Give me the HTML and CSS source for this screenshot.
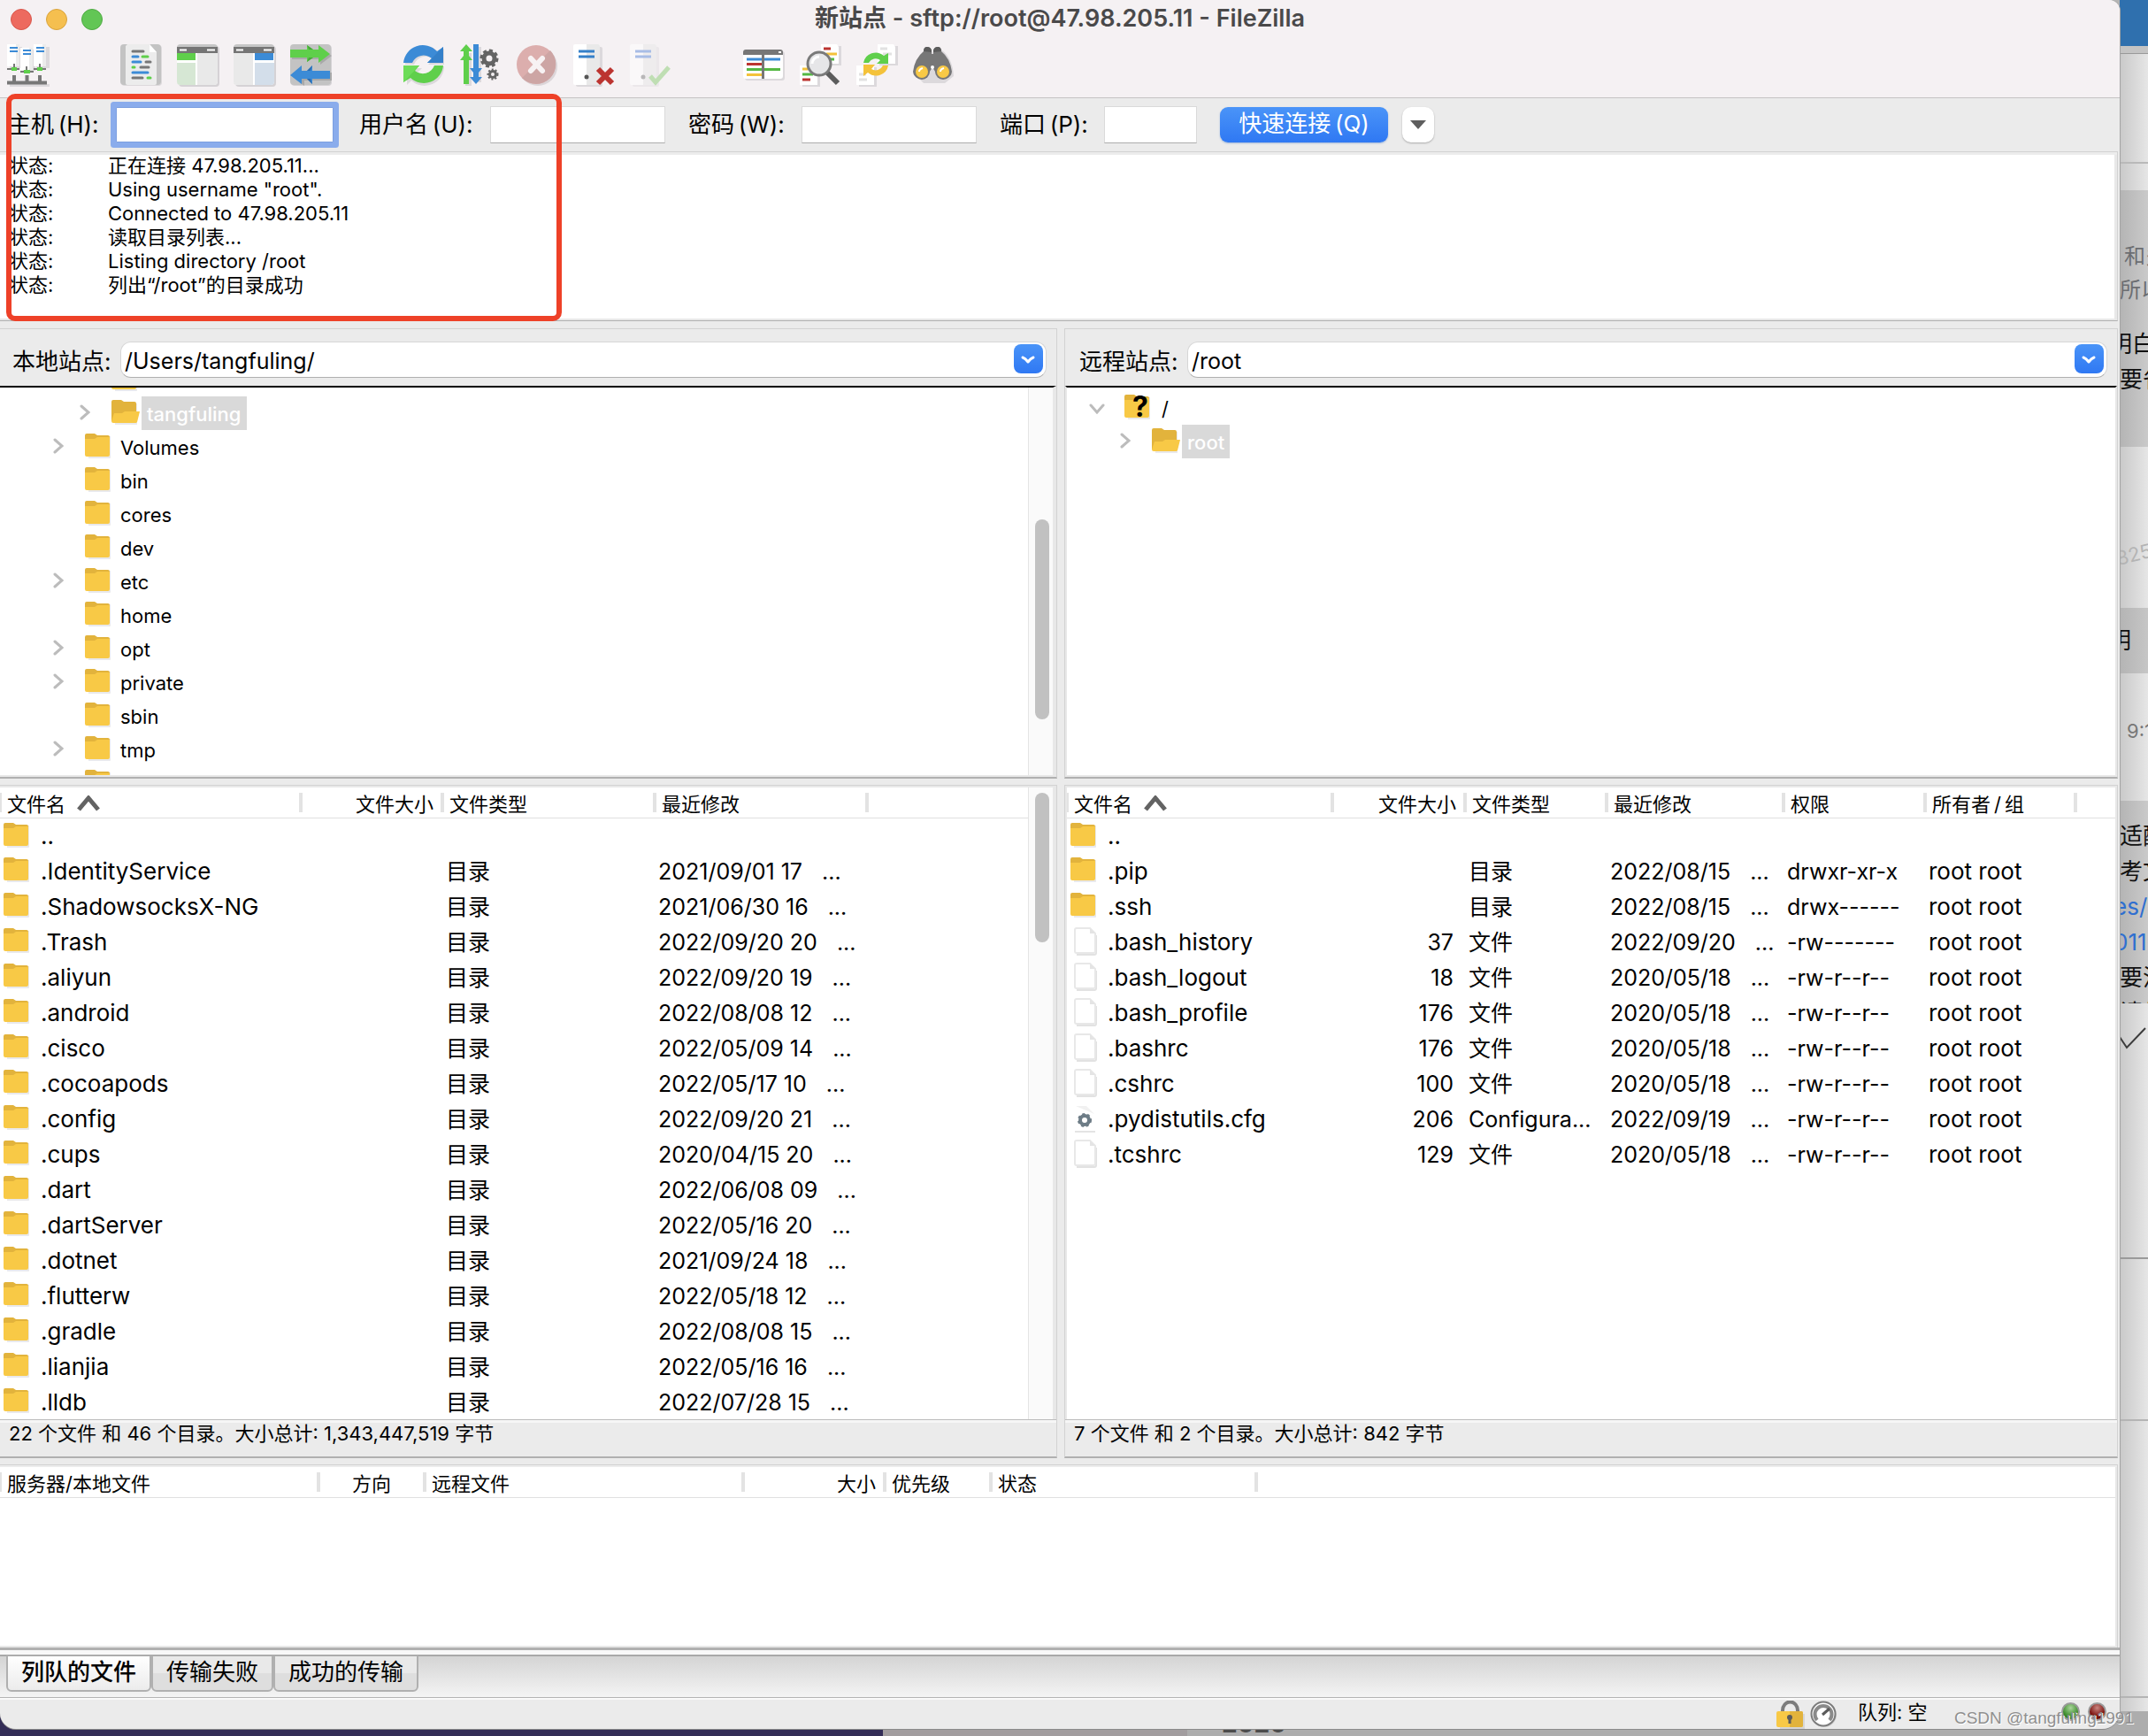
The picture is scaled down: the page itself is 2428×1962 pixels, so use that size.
FILE: index.html
```html
<!DOCTYPE html>
<html lang="zh-CN">
<head>
<meta charset="utf-8">
<title>新站点 - sftp://root@47.98.205.11 - FileZilla</title>
<link rel="stylesheet" href="styles.css">
</head>
<body>
<svg class="defs" aria-hidden="true">
  <symbol id="folder" viewBox="0 0 30 28">
    <path d="M2 3h27v24a1 1 0 0 1-1 1H4z" fill="#e9e9ec"/>
    <path d="M0 2a2 2 0 0 1 2-2h9l3 2h12a2 2 0 0 1 2 2v6H0z" fill="#e2b33c"/>
    <path d="M0 6h11l3-2h14v20a2 2 0 0 1-2 2H2a2 2 0 0 1-2-2z" fill="#f8c946"/>
  </symbol>
  <symbol id="folder-open" viewBox="0 0 32 28">
    <path d="M2 4h27v24H4z" fill="#e9e9ec"/>
    <path d="M0 2a2 2 0 0 1 2-2h9l3 2h12a2 2 0 0 1 2 2v20H0z" fill="#e2b33c"/>
    <path d="M3 15h9l3-2h17l-3 12a2 2 0 0 1-2 1H2a2 2 0 0 1-2-2z" fill="#f8c946"/>
  </symbol>
  <symbol id="file" viewBox="0 0 26 32">
    <path d="M3 31h20a2 2 0 0 0 2-2V9" fill="none" stroke="#e2e2e2" stroke-width="2"/>
    <path d="M1 3a2 2 0 0 1 2-2h15l6 6v20a2 2 0 0 1-2 2H3a2 2 0 0 1-2-2z" fill="#fff" stroke="#e8e8e8" stroke-width="2"/>
    <path d="M18 1v6h6z" fill="#e4e4e4"/>
  </symbol>
  <symbol id="config" viewBox="0 0 26 32">
    <path d="M2 2h12l9 9z" fill="#f1f1f1"/>
    <circle cx="12" cy="18" r="5" fill="none" stroke="#6d7c86" stroke-width="4"/>
    <circle cx="12" cy="18" r="7" fill="none" stroke="#6d7c86" stroke-width="2" stroke-dasharray="3 3"/>
    <path d="M1 31h23" stroke="#e4e4e4" stroke-width="2"/>
  </symbol>
  <symbol id="chev" viewBox="0 0 12 18"><path d="M2 2l8 7-8 7" fill="none" stroke="#bcbcbc" stroke-width="3" stroke-linecap="round"/></symbol>
  <symbol id="chev-down" viewBox="0 0 18 12"><path d="M2 2l7 8 7-8" fill="none" stroke="#bcbcbc" stroke-width="3" stroke-linecap="round"/></symbol>
  <symbol id="caret" viewBox="0 0 28 18"><path d="M3 16L14 3l11 13" fill="none" stroke="#636363" stroke-width="5"/></symbol>
  <symbol id="combo" viewBox="0 0 32 32"><path d="M10 14q3 1 6 5q3-4 6-5" fill="none" stroke="#fff" stroke-width="3" stroke-linecap="round" stroke-linejoin="round"/></symbol>
</svg>

<main class="window">
  <header class="chrome">
    <div class="titlebar">
      <div class="lights"><button class="light light-close" aria-label="关闭"></button><button class="light light-min" aria-label="最小化"></button><button class="light light-max" aria-label="缩放"></button></div>
      <h1 class="title">新站点 - sftp://root@47.98.205.11 - FileZilla</h1>
    </div>
    <div class="toolbar">
      <button class="tool" aria-label="站点管理器"><svg viewBox="0 0 48 48">
        <path d="M3 3h14v24H3zM18 6h14v24H18zM33 3h15v24H33zM3 45h45v3H3z" fill="#dcd9dc"/>
        <path d="M0 0h14v25H0zM15 4h14v25H15zM30 0h14v25H30z" fill="#fff"/>
        <path d="M10 0h4v25h-4zM25 4h4v25h-4zM40 0h4v25h-4z" fill="#ececec"/>
        <path d="M3 4h9M3 8h9M18 7h9M18 11h9M33 4h9M33 8h9" stroke="#3c8bd6" stroke-width="2"/>
        <path d="M0 28h14M30 28h14M15 31h15M8 22v6M22 25v6M37 22v6" stroke="#777" stroke-width="2"/>
        <path d="M0 43.500h45M8 35v9M22.500 35v9M37 35v9" stroke="#777" stroke-width="4"/>
        <path d="M5 26h6v4H5zM19 29h7v4h-7zM34 26h6v4h-6z" fill="#5fcf4b"/>
      </svg></button>
      <span class="tool-gap"></span>
      <button class="tool" aria-label="消息日志"><svg viewBox="0 0 48 48">
        <rect x="1" y="1" width="46" height="46" rx="4" fill="#dcd9dc"/><rect width="46" height="46" rx="4" fill="#c3c3c3"/>
        <path d="M8 0h25l8 9v35a2 2 0 0 1-2 2H8a2 2 0 0 1-2-2V2z" fill="#ececec"/><path d="M33 0l8 9h-8z" fill="#fff"/>
        <g stroke-width="3" stroke-linecap="round"><path d="M14 8h12M29 20h5M23 26h9M14 38h11" stroke="#777"/><path d="M14 14h6M14 20h9M14 32h17" stroke="#3c8bd6"/><path d="M25 14h6M14 26h2M31 38h3" stroke="#5fcf4b"/></g>
      </svg></button>
      <button class="tool" aria-label="本地目录树"><svg viewBox="0 0 48 48">
        <rect x="2" y="2" width="46" height="46" rx="4" fill="#d5d2d5"/><rect width="46" height="46" rx="4" fill="#c6c6c6"/>
        <path d="M0 10h46v32a4 4 0 0 1-4 4H4a4 4 0 0 1-4-4z" fill="#fff"/>
        <path d="M23 10h23v32a4 4 0 0 1-4 4H23z" fill="#e9e9e9"/><path d="M0 3h46v7H0z" fill="#757575"/>
        <path d="M3 6.500h8M34 6.500h9" stroke="#fff" stroke-width="2"/><path d="M0 10h21v8H0z" fill="#5fcf4b"/><path d="M0 21h21v25H4a4 4 0 0 1-4-4z" fill="#d6e7d4"/>
      </svg></button>
      <button class="tool" aria-label="远程目录树"><svg viewBox="0 0 48 48">
        <rect x="2" y="2" width="46" height="46" rx="4" fill="#d5d2d5"/><rect width="46" height="46" rx="4" fill="#c6c6c6"/>
        <path d="M0 10h46v32a4 4 0 0 1-4 4H4a4 4 0 0 1-4-4z" fill="#fff"/>
        <path d="M0 10h22v36H4a4 4 0 0 1-4-4z" fill="#e9e9e9"/><path d="M0 3h46v7H0z" fill="#757575"/>
        <path d="M3 6.500h8M34 6.500h9" stroke="#fff" stroke-width="2"/><path d="M24 10h21v8H24z" fill="#3c8bd6"/><path d="M24 21h22v21a4 4 0 0 1-4 4H24z" fill="#d3deea"/>
      </svg></button>
      <button class="tool" aria-label="传输队列"><svg viewBox="0 0 48 48">
        <rect x="1" y="1" width="46" height="46" rx="4" fill="#d5d2d5"/><rect width="46" height="46" rx="4" fill="#c3c3c3"/>
        <path d="M2 8h30V3l15 10-13 10v-6H2zM3 32h44v9H16v6L3 37z" fill="#a9a9a9"/>
        <path d="M0 6h19V1l7 5h6V1l13 10-13 10v-6h-6l-7 5v-5H0z" fill="#5fcf4b"/>
        <path d="M45 30H25v-6l-6 6h-6v-6L0 35l13 10v-6h6l6 6v-6h20z" fill="#3c8bd6"/>
        <path d="M19 1l7 5h-5zM19 20l7-5h-5z" fill="#45a838"/><path d="M25 24l-6 6h4zM25 45l-6-6h4z" fill="#2b6cb0"/>
      </svg></button>
      <span class="tool-gap"></span>
      <button class="tool" aria-label="刷新"><svg viewBox="0 0 48 48">
        <path d="M2 23A22 22 0 0 1 40 9l6-4v18H28l6-6A14 14 0 0 0 12 23z" fill="#dcd9dc"/><path d="M46 25A22 22 0 0 1 9 41l-5 5V27h17l-6 6a14 14 0 0 0 20-8z" fill="#dcd9dc"/>
        <path d="M0 21A22 22 0 0 1 38 8l7-5v18H27l5-5A14 14 0 0 0 10 21z" fill="#3c8bd6"/><path d="M27 21h18V3z" fill="#3480c9"/>
        <path d="M45 24A22 22 0 0 1 8 38l-8 5V24h18l-5 6a14 14 0 0 0 22-6z" fill="#5fcf4b"/><path d="M18 24H0v19z" fill="#6ddc58"/>
      </svg></button>
      <button class="tool" aria-label="处理队列"><svg viewBox="0 0 48 48">
        <path d="M6 10h7v37H6zM17 3h7v40H17z" fill="#dcd9dc"/>
        <path d="M7 0l7 8h-4v5l4 5h-4v27H4V18H0l4-5V8H0z" fill="#5fcf4b"/>
        <path d="M15 0h6v27h4l-4 5v5h4l-7 8-7-8h4v-5l-4-5h4z" fill="#3c8bd6"/>
        <circle cx="33" cy="16" r="6" fill="none" stroke="#646464" stroke-width="5"/><circle cx="33" cy="16" r="9" fill="none" stroke="#646464" stroke-width="3" stroke-dasharray="4 3"/>
        <circle cx="37" cy="34" r="3.500" fill="none" stroke="#646464" stroke-width="3"/><circle cx="37" cy="34" r="5.500" fill="none" stroke="#646464" stroke-width="2" stroke-dasharray="2 2"/>
      </svg></button>
      <button class="tool" aria-label="取消"><svg viewBox="0 0 48 48">
        <circle cx="24" cy="25" r="22" fill="#dcd6d9"/><circle cx="22" cy="23" r="22" fill="#dcaead"/><path d="M38 7a22 22 0 0 1-32 31z" fill="#cda5a4"/>
        <path d="M16 16l13 14M29 16L16 30" stroke="#f7f2f3" stroke-width="6" stroke-linecap="round"/>
      </svg></button>
      <button class="tool" aria-label="断开连接"><svg viewBox="0 0 48 48">
        <rect x="3" y="3" width="30" height="45" rx="2" fill="#dcd9dc"/><rect width="30" height="46" rx="2" fill="#fff"/><path d="M15 0h13a2 2 0 0 1 2 2v42a2 2 0 0 1-2 2H15z" fill="#e9e9e9"/>
        <path d="M6 8h18M6 14h18" stroke="#3580c9" stroke-width="3"/><circle cx="15" cy="37" r="2.500" fill="#555"/>
        <path d="M28 28l16 16M44 28L28 44" stroke="#bc3430" stroke-width="6"/>
      </svg></button>
      <button class="tool tool-off" aria-label="重新连接"><svg viewBox="0 0 48 48">
        <rect x="3" y="3" width="30" height="45" rx="2" fill="#e3e0e3"/><rect width="30" height="46" rx="2" fill="#fff"/><path d="M15 0h13a2 2 0 0 1 2 2v42a2 2 0 0 1-2 2H15z" fill="#e9e9e9"/>
        <path d="M6 8h18M6 14h18" stroke="#6a94dc" stroke-width="3"/><circle cx="15" cy="37" r="2.500" fill="#888"/>
        <path d="M23 36l6 7 15-17" fill="none" stroke="#94d080" stroke-width="5"/>
      </svg></button>
      <span class="tool-gap"></span>
      <button class="tool" aria-label="目录比较"><svg viewBox="0 0 48 48">
        <rect x="2" y="8" width="45" height="33" rx="3" fill="#dcd9dc"/><rect y="6" width="45" height="33" rx="3" fill="#fff"/><path d="M0 12V9a3 3 0 0 1 3-3h39a3 3 0 0 1 3 3v3z" fill="#777"/>
        <path d="M40 9h3" stroke="#fff" stroke-width="2"/>
        <g stroke-width="3"><path d="M4 17h38" stroke="#3c8bd6"/><path d="M4 22.500h18" stroke="#bc3430"/><path d="M4 28.500h38" stroke="#55b844"/><path d="M4 34.500h18" stroke="#f4c23a"/><path d="M22.500 12v27" stroke="#777"/></g>
      </svg></button>
      <button class="tool" aria-label="筛选"><svg viewBox="0 0 48 48">
        <path d="M26 2h21v22H26zM3 26h20v22H3z" fill="#dcd9dc"/><path d="M24 0h18l2 3v19H24zM0 24h20v22H0z" fill="#fff"/>
        <g stroke-width="3"><path d="M27 5h8M3 40h9" stroke="#bc3430"/><path d="M30 11h12M3 28h6" stroke="#f4c23a"/><path d="M34 17h5M3 34h12" stroke="#55b844"/></g>
        <path d="M30 31l13 13" stroke="#5c5c5c" stroke-width="6"/><circle cx="22" cy="22" r="13" fill="#e6e6e8" stroke="#7a7a7a" stroke-width="3"/><path d="M14 22a8 8 0 0 1 8-8" fill="none" stroke="#fff" stroke-width="3"/>
      </svg></button>
      <button class="tool" aria-label="同步浏览"><svg viewBox="0 0 48 48">
        <path d="M26 2h21v22H26zM3 26h20v22H3z" fill="#dcd9dc"/><path d="M24 0h18l2 3v19H24zM0 24h20v22H0z" fill="#fff"/>
        <path d="M27 5h8M30 11h10M3 34h8M3 40h9" stroke="#e2e2e2" stroke-width="3"/>
        <path d="M8 21a14 14 0 0 1 23-8l5-3v12H23l4-4a9 9 0 0 0-13 3z" fill="#5fcf4b"/><path d="M36 24a14 14 0 0 1-23 8l-5 4V23h13l-4 5a9 9 0 0 0 13-4z" fill="#f4c23a"/>
      </svg></button>
      <button class="tool" aria-label="查找文件"><svg viewBox="0 0 48 48">
        <path d="M4 36q0-20 12-30l8 4 8-4q13 10 14 30l-10 8H12z" fill="#dcd9dc"/>
        <path d="M12 8q0-5 4-5t5 4v4h2V7q1-4 5-4t4 5q10 8 12 23a9 9 0 0 1-17 3l-5-8-5 8A9 9 0 0 1 0 31Q2 16 12 8z" fill="#777"/>
        <path d="M12 8q0-5 4-5t5 4v2zM23 9V7q1-4 5-4t4 5z" fill="#5c5c5c"/><circle cx="22" cy="26" r="2" fill="#fff"/>
        <circle cx="10" cy="31" r="9" fill="#777"/><circle cx="34" cy="31" r="9" fill="#777"/>
        <circle cx="10" cy="31" r="7" fill="#f8c946"/><circle cx="34" cy="31" r="7" fill="#f8c946"/>
        <path d="M7 31q0-3 4-4M31 31q0-3 4-4" fill="none" stroke="#fff" stroke-width="2"/>
      </svg></button>
    </div>
  </header>

  <form class="quick">
    <label class="q-host" for="host">主机&#8201;(H):</label><input class="field field-focus" id="host" type="text">
    <label class="q-user" for="user">用户名&#8201;(U):</label><input class="field" id="user" type="text">
    <label class="q-pass" for="pass">密码&#8201;(W):</label><input class="field" id="pass" type="password">
    <label class="q-port" for="port">端口&#8201;(P):</label><input class="field field-port" id="port" type="text">
    <button class="connect" type="button">快速连接&#8201;(Q)</button>
    <button class="history" type="button" aria-label="历史"><svg viewBox="0 0 18 10"><path d="M0 0h18L9 10z" fill="#5e5e5e"/></svg></button>
  </form>

  <dl class="log">
    <dt>状态:</dt><dd>正在连接 47.98.205.11...</dd>
    <dt>状态:</dt><dd>Using username "root".</dd>
    <dt>状态:</dt><dd>Connected to 47.98.205.11</dd>
    <dt>状态:</dt><dd>读取目录列表...</dd>
    <dt>状态:</dt><dd>Listing directory /root</dd>
    <dt>状态:</dt><dd>列出“/root”的目录成功</dd>
  </dl>

  <div class="panes">
    <section class="pane site site-local">
      <div class="address"><label for="local">本地站点:</label><div class="combo"><input id="local" type="text" value="/Users/tangfuling/"><button aria-label="展开"><svg><use href="#combo"/></svg></button></div></div>
      <div class="scroll">
        <ul class="tree tree-local">
          <li class="deep"><span class="tw"></span><svg class="ico"><use href="#folder"/></svg></li>
          <li class="deep"><span class="tw"><svg><use href="#chev"/></svg></span><svg class="ico-open"><use href="#folder-open"/></svg><span class="sel">tangfuling</span></li>
          <li><span class="tw"><svg><use href="#chev"/></svg></span><svg class="ico"><use href="#folder"/></svg><span>Volumes</span></li>
          <li><span class="tw"></span><svg class="ico"><use href="#folder"/></svg><span>bin</span></li>
          <li><span class="tw"></span><svg class="ico"><use href="#folder"/></svg><span>cores</span></li>
          <li><span class="tw"></span><svg class="ico"><use href="#folder"/></svg><span>dev</span></li>
          <li><span class="tw"><svg><use href="#chev"/></svg></span><svg class="ico"><use href="#folder"/></svg><span>etc</span></li>
          <li><span class="tw"></span><svg class="ico"><use href="#folder"/></svg><span>home</span></li>
          <li><span class="tw"><svg><use href="#chev"/></svg></span><svg class="ico"><use href="#folder"/></svg><span>opt</span></li>
          <li><span class="tw"><svg><use href="#chev"/></svg></span><svg class="ico"><use href="#folder"/></svg><span>private</span></li>
          <li><span class="tw"></span><svg class="ico"><use href="#folder"/></svg><span>sbin</span></li>
          <li><span class="tw"><svg><use href="#chev"/></svg></span><svg class="ico"><use href="#folder"/></svg><span>tmp</span></li>
          <li><span class="tw"></span><svg class="ico"><use href="#folder"/></svg></li>
        </ul>
        <div class="track track-tree"><div class="thumb"></div></div>
      </div>
    </section>
    <section class="pane site site-remote">
      <div class="address"><label for="remote">远程站点:</label><div class="combo"><input id="remote" type="text" value="/root"><button aria-label="展开"><svg><use href="#combo"/></svg></button></div></div>
      <div class="scroll">
        <ul class="tree tree-remote">
          <li><span class="tw"><svg class="down"><use href="#chev-down"/></svg></span><span class="unknown"><svg class="ico"><use href="#folder"/></svg><b>?</b></span><span>/</span></li>
          <li class="deep"><span class="tw"><svg><use href="#chev"/></svg></span><svg class="ico-open"><use href="#folder-open"/></svg><span class="sel">root</span></li>
        </ul>
      </div>
    </section>

    <section class="pane files files-local">
      <div class="scroll">
        <table class="list">
          <colgroup><col class="w338"><col class="w160"><col class="w240"><col class="w240"><col></colgroup>
          <thead><tr><th>文件名<svg class="sort"><use href="#caret"/></svg></th><th class="num">文件大小</th><th>文件类型</th><th>最近修改</th><th></th></tr></thead>
          <tbody>
            <tr><td><svg class="ico"><use href="#folder"/></svg>..</td><td></td><td></td><td></td><td></td></tr>
            <tr><td><svg class="ico"><use href="#folder"/></svg>.IdentityService</td><td></td><td>目录</td><td>2021/09/01 17<i>...</i></td><td></td></tr>
            <tr><td><svg class="ico"><use href="#folder"/></svg>.ShadowsocksX-NG</td><td></td><td>目录</td><td>2021/06/30 16<i>...</i></td><td></td></tr>
            <tr><td><svg class="ico"><use href="#folder"/></svg>.Trash</td><td></td><td>目录</td><td>2022/09/20 20<i>...</i></td><td></td></tr>
            <tr><td><svg class="ico"><use href="#folder"/></svg>.aliyun</td><td></td><td>目录</td><td>2022/09/20 19<i>...</i></td><td></td></tr>
            <tr><td><svg class="ico"><use href="#folder"/></svg>.android</td><td></td><td>目录</td><td>2022/08/08 12<i>...</i></td><td></td></tr>
            <tr><td><svg class="ico"><use href="#folder"/></svg>.cisco</td><td></td><td>目录</td><td>2022/05/09 14<i>...</i></td><td></td></tr>
            <tr><td><svg class="ico"><use href="#folder"/></svg>.cocoapods</td><td></td><td>目录</td><td>2022/05/17 10<i>...</i></td><td></td></tr>
            <tr><td><svg class="ico"><use href="#folder"/></svg>.config</td><td></td><td>目录</td><td>2022/09/20 21<i>...</i></td><td></td></tr>
            <tr><td><svg class="ico"><use href="#folder"/></svg>.cups</td><td></td><td>目录</td><td>2020/04/15 20<i>...</i></td><td></td></tr>
            <tr><td><svg class="ico"><use href="#folder"/></svg>.dart</td><td></td><td>目录</td><td>2022/06/08 09<i>...</i></td><td></td></tr>
            <tr><td><svg class="ico"><use href="#folder"/></svg>.dartServer</td><td></td><td>目录</td><td>2022/05/16 20<i>...</i></td><td></td></tr>
            <tr><td><svg class="ico"><use href="#folder"/></svg>.dotnet</td><td></td><td>目录</td><td>2021/09/24 18<i>...</i></td><td></td></tr>
            <tr><td><svg class="ico"><use href="#folder"/></svg>.flutterw</td><td></td><td>目录</td><td>2022/05/18 12<i>...</i></td><td></td></tr>
            <tr><td><svg class="ico"><use href="#folder"/></svg>.gradle</td><td></td><td>目录</td><td>2022/08/08 15<i>...</i></td><td></td></tr>
            <tr><td><svg class="ico"><use href="#folder"/></svg>.lianjia</td><td></td><td>目录</td><td>2022/05/16 16<i>...</i></td><td></td></tr>
            <tr><td><svg class="ico"><use href="#folder"/></svg>.lldb</td><td></td><td>目录</td><td>2022/07/28 15<i>...</i></td><td></td></tr>
          </tbody>
        </table>
        <div class="track track-list"><div class="thumb"></div></div>
      </div>
      <p class="summary">22 个文件 和 46 个目录。大小总计: 1,343,447,519 字节</p>
    </section>
    <section class="pane files files-remote">
      <div class="scroll">
        <table class="list">
          <colgroup><col class="w298"><col class="w150"><col class="w160"><col class="w200"><col class="w160"><col class="w170"><col></colgroup>
          <thead><tr><th>文件名<svg class="sort"><use href="#caret"/></svg></th><th class="num">文件大小</th><th>文件类型</th><th>最近修改</th><th>权限</th><th>所有者&#8201;/&#8201;组</th><th></th></tr></thead>
          <tbody>
            <tr><td><svg class="ico"><use href="#folder"/></svg>..</td><td></td><td></td><td></td><td></td><td></td><td></td></tr>
            <tr><td><svg class="ico"><use href="#folder"/></svg>.pip</td><td></td><td>目录</td><td>2022/08/15<i>...</i></td><td>drwxr-xr-x</td><td class="own">root root</td><td></td></tr>
            <tr><td><svg class="ico"><use href="#folder"/></svg>.ssh</td><td></td><td>目录</td><td>2022/08/15<i>...</i></td><td>drwx------</td><td class="own">root root</td><td></td></tr>
            <tr><td><svg class="ico-file"><use href="#file"/></svg>.bash_history</td><td class="num">37</td><td>文件</td><td>2022/09/20<i>...</i></td><td>-rw-------</td><td class="own">root root</td><td></td></tr>
            <tr><td><svg class="ico-file"><use href="#file"/></svg>.bash_logout</td><td class="num">18</td><td>文件</td><td>2020/05/18<i>...</i></td><td>-rw-r--r--</td><td class="own">root root</td><td></td></tr>
            <tr><td><svg class="ico-file"><use href="#file"/></svg>.bash_profile</td><td class="num">176</td><td>文件</td><td>2020/05/18<i>...</i></td><td>-rw-r--r--</td><td class="own">root root</td><td></td></tr>
            <tr><td><svg class="ico-file"><use href="#file"/></svg>.bashrc</td><td class="num">176</td><td>文件</td><td>2020/05/18<i>...</i></td><td>-rw-r--r--</td><td class="own">root root</td><td></td></tr>
            <tr><td><svg class="ico-file"><use href="#file"/></svg>.cshrc</td><td class="num">100</td><td>文件</td><td>2020/05/18<i>...</i></td><td>-rw-r--r--</td><td class="own">root root</td><td></td></tr>
            <tr><td><svg class="ico-file"><use href="#config"/></svg>.pydistutils.cfg</td><td class="num">206</td><td>Configura...</td><td>2022/09/19<i>...</i></td><td>-rw-r--r--</td><td class="own">root root</td><td></td></tr>
            <tr><td><svg class="ico-file"><use href="#file"/></svg>.tcshrc</td><td class="num">129</td><td>文件</td><td>2020/05/18<i>...</i></td><td>-rw-r--r--</td><td class="own">root root</td><td></td></tr>
          </tbody>
        </table>
      </div>
      <p class="summary">7 个文件 和 2 个目录。大小总计: 842 字节</p>
    </section>
  </div>

  <section class="queue">
    <table class="list">
      <colgroup><col class="w358"><col class="w120"><col class="w360"><col class="w160"><col class="w120"><col class="w300"><col></colgroup>
      <thead><tr><th>服务器/本地文件</th><th class="mid">方向</th><th>远程文件</th><th class="num">大小</th><th>优先级</th><th>状态</th><th></th></tr></thead>
    </table>
  </section>

  <nav class="tabs"><button class="tab tab-on">列队的文件</button><button class="tab">传输失败</button><button class="tab">成功的传输</button></nav>

  <footer class="status">
    <svg class="s-ico" viewBox="0 0 32 32"><path d="M2 15h30v17H4z" fill="#d6d6d6"/><path d="M7 13v-2a8 9 0 0 1 17 0v2" fill="none" stroke="#7c7c7c" stroke-width="4"/><rect y="12" width="30" height="18" rx="2" fill="#f8c946"/><path d="M15 12h13a2 2 0 0 1 2 2v14a2 2 0 0 1-2 2H15z" fill="#e2b33c"/><circle cx="15" cy="19" r="3" fill="#5b5b5b"/><path d="M15 19v7" stroke="#5b5b5b" stroke-width="3"/></svg>
    <svg class="s-ico" viewBox="0 0 32 32"><circle cx="16" cy="16" r="14" fill="#d0d0d0"/><circle cx="15" cy="15" r="13.500" fill="#fff" stroke="#7c7c7c" stroke-width="2"/><path d="M8 22a9.500 9.500 0 1 1 14 0" fill="none" stroke="#8a8a8a" stroke-width="4"/><path d="M14 16l8-7" stroke="#5b5b5b" stroke-width="3"/></svg>
    <span class="s-text">队列: 空</span>
    <span class="led led-green"></span><span class="led led-red"></span>
  </footer>
</main>

<aside class="behind">
  <div class="b-top"></div><div class="b-bar"></div><div class="b-head"></div>
  <div class="b-msg b-msg1"><p class="dim first">和多</p><p class="dim">所以</p><p class="gap">明白</p><p>要省</p></div>
  <div class="b-space"><span>825</span></div>
  <div class="b-chip">明</div>
  <div class="b-time">9:1</div>
  <div class="b-msg b-msg2"><p>适配</p><p>考文</p><p class="link">es/</p><p class="link">011</p><p>要注</p><p>请的</p></div>
  <div class="b-check"><svg viewBox="0 0 32 26"><path d="M0 12l8 12L29 2" fill="none" stroke="#3c3c3c" stroke-width="2"/></svg></div>
  <div class="b-rest"></div><div class="b-rest"></div>
</aside>
<div class="dock"><span class="dock-navy"></span><span class="dock-side"></span><span class="dock-doc">2020</span></div>
<div class="mark-box" aria-hidden="true"></div>
<p class="watermark">CSDN @tangfuling1991</p>
</body>
</html>
```
FILE: styles.css
```css
* { box-sizing: border-box; }
body {
  margin: 0;
  min-height: 100vh;
  position: relative;
  display: grid;
  grid-template: minmax(0, 1fr) 8px / minmax(0, 1fr) 32px;
  font-family: Inter, "Noto Sans CJK SC", sans-serif;
  font-size: 22px;
  color: #000;
  background: #b4b4b4;
  overflow-x: hidden;
}
button, input { font: inherit; color: inherit; border: 0; margin: 0; padding: 0; outline: 0; }
button { background: none; }
h1, p, ul, dl, dd { margin: 0; padding: 0; }
svg { display: block; flex: none; }
.defs { position: absolute; width: 0; height: 0; }

.window {
  display: flex;
  flex-direction: column;
  min-width: 0;
  background: #ebebeb;
  border-radius: 0 12px 20px 18px;
  box-shadow: 1px 0 0 #a4a4a4, 0 1px 0 #8a8a8a;
  overflow: hidden;
  z-index: 1;
}
.chrome { background: #f5f1f3; height: 111px; border-bottom: 1px solid #c6c3c4; }
.titlebar { display: grid; grid-template-columns: 200px 1fr 200px; align-items: center; height: 44px; }
.lights { display: flex; gap: 16px; padding-left: 12px; }
.light { width: 24px; height: 24px; border-radius: 50%; border: 1px solid; }
.light-close { background: #ed6a5f; border-color: #d9564b; }
.light-min { background: #f5bf4f; border-color: #d9a33c; }
.light-max { background: #62c655; border-color: #50aa44; }
.title { font-size: 27px; font-weight: 600; line-height: 42px; padding-bottom: 2px; text-align: center; color: #4a494a; }
.toolbar { display: flex; gap: 16px; padding: 6px 8px; }
.tool { width: 48px; height: 48px; }
.tool svg { width: 48px; height: 48px; }
.tool-off { opacity: .55; }
.tool-gap { width: 48px; }

.quick { display: flex; align-items: center; height: 60px; padding-left: 9px; font-size: 26px; white-space: nowrap; }
.quick label { line-height: 40px; }
.q-host { width: 122px; }
.q-user { width: 148px; margin-left: 29px; }
.q-pass { width: 128px; margin-left: 26px; }
.q-port { width: 118px; margin-left: 26px; }
.field { width: 198px; height: 42px; background: #fff; border: 1px solid #dadada; border-bottom-color: #acacac; }
.field-focus { width: 246px; height: 40px; border-color: #7c9fe0; box-shadow: 0 0 0 6px #8aacec; border-radius: 1px; }
.field-port { width: 105px; }
.connect { width: 190px; height: 40px; margin: 0 16px 0 26px; border-radius: 9px; color: #fff; line-height: 36px; padding-bottom: 2px; background: linear-gradient(#4a94f8, #2f78f3); box-shadow: 0 1px 2px #9fb6d8; }
.history { width: 36px; height: 40px; border-radius: 10px; background: #fff; box-shadow: 0 1px 2px #aaa; display: flex; align-items: center; justify-content: center; }
.history svg { width: 18px; height: 10px; }

.log {
  display: grid;
  grid-template-columns: 112px 1fr;
  grid-auto-rows: 27px;
  align-content: start;
  height: 192px;
  padding: 2px 0 0 10px;
  border: solid #d2d2d2;
  border-width: 1px 1px 1px 0;
  border-bottom-color: #b0b0b0;
  box-shadow: inset 0 3px #ececec, inset -3px -2px #e8e8e8;
  margin-right: 2px;
  background: #fff;
  line-height: 27px;
}

.panes { display: grid; grid-template-columns: minmax(0, 1195fr) minmax(0, 1191fr); column-gap: 8px; row-gap: 7px; margin: 8px 2px 0 0; }
.pane { display: flex; flex-direction: column; min-width: 0; border: 1px solid #d2d2d2; border-bottom: 2px solid #b0b0b0; }
.site-local, .files-local { border-left: 0; }
.address { display: flex; align-items: center; height: 64px; padding: 4px 11px 0 14px; font-size: 26px; }
.site-remote .address { padding-left: 16px; }
.address label { width: 122px; white-space: nowrap; }
.combo { flex: 1; display: flex; align-items: center; height: 41px; background: #fff; border-radius: 12px; border: 1px solid #d6d6d6; border-bottom-color: #b0b0b0; padding: 0 3px 1px 4px; }
.combo input { flex: 1; min-width: 0; height: 36px; margin-top: 5px; background: none; font-size: 25px; }
.combo button { width: 33px; height: 33px; border-radius: 8px; background: linear-gradient(#4a94f8, #2f78f3); }
.combo svg { width: 32px; height: 32px; }
.scroll { display: flex; flex: 1; background: #fff; min-height: 0; }
.site .scroll { height: 442px; flex: none; border-top: 2px solid #000; border-bottom: 2px solid #e8e8e8; }
.pane .scroll { border-right: 4px solid #e8e8e8; }
.site-remote .scroll, .files-remote .scroll { border-left: 2px solid #e8e8e8; border-right-width: 2px; }

.tree { flex: 1; list-style: none; overflow: hidden; }
.tree li { display: flex; align-items: flex-start; height: 38px; padding-left: 60px; line-height: 38px; font-size: 22px; }
.tree li > span:last-child { padding: 1px 6px 0; height: 38px; }
.tree .deep { padding-left: 90px; }
.tw { width: 36px; height: 38px; }
.tree .tw svg { width: 12px; height: 18px; margin-top: 9px; }
.tree .tw .down { width: 18px; height: 12px; margin-top: 14px; }
.ico { width: 30px; height: 28px; margin-right: 4px; }
.tree .ico, .tree .ico-open { margin-top: 4px; }
.ico-open { width: 32px; height: 28px; margin-right: 2px; }
.tree .sel { background: #d9d9d9; color: #fff; font-weight: 500; }
.tree-local li:first-child { height: 10px; }
.tree-local li:first-child .ico { margin-top: -24px; }
.tree-remote { padding-top: 4px; }
.tree-remote li { padding-left: 25px; }
.tree-remote .tw { width: 40px; }
.tree-remote .deep { padding-left: 60px; }
.tree-remote .deep .tw { width: 36px; }
.unknown { position: relative; margin-right: 2px; }
.unknown b { position: absolute; left: 9px; top: 0; font-size: 32px; line-height: 36px; }

.track { width: 28px; border-left: 1px solid #e4e4e4; background: #fafafa; padding: 0 4px 0 7px; }
.thumb { width: 16px; border-radius: 8px; background: #c1c1c1; }
.track-tree { padding-top: 149px; }
.track-tree .thumb { height: 226px; }
.track-list { padding-top: 6px; }
.track-list .thumb { height: 169px; }

.files .scroll { border-top: 2px solid #e8e8e8; align-items: flex-start; }
.files .track { align-self: stretch; }
.list { flex: 1; width: 100%; table-layout: fixed; border-collapse: collapse; }
.list th {
  height: 34px;
  padding: 4px 0 0 10px;
  font-size: 22px;
  font-weight: 400;
  line-height: 28px;
  text-align: left;
  white-space: nowrap;
  border-bottom: 1px solid #e0e0e0;
  background: linear-gradient(#e3e3e3, #e3e3e3) no-repeat 0 6px / 4px 22px;
}
.list th:first-child { padding-left: 8px; background-size: 2px 22px; }
.list .num { text-align: right; padding-right: 8px; }
.list .mid { text-align: center; padding: 4px 0 0 4px; }
.list td { height: 40px; padding: 1px 0 0 6px; font-size: 25px; line-height: 38px; white-space: nowrap; }
.list td:first-child { padding-left: 4px; font-size: 26px; }
.list .own { font-size: 26px; }
.list td.num { padding-right: 11px; }
.list td i { font-style: normal; margin-left: 22px; }
.list td svg { display: inline-block; vertical-align: middle; }
.list td .ico { margin: -6px 12px 0 0; }
.list td .ico-file { width: 26px; height: 32px; margin: -4px 12px 0 4px; }
.sort { display: inline-block; width: 28px; height: 18px; margin-left: 12px; }
.w338 { width: 338px; } .w160 { width: 160px; } .w240 { width: 240px; }
.w298 { width: 298px; } .w150 { width: 150px; } .w200 { width: 200px; } .w170 { width: 170px; }
.w358 { width: 358px; } .w120 { width: 120px; } .w360 { width: 360px; } .w300 { width: 300px; }
.summary { height: 42px; padding: 0 10px; border-top: 1px solid #bcbcbc; box-shadow: inset 0 3px #f6f6f6; line-height: 30px; font-size: 22px; }

.queue { flex: 1; margin: 7px 2px 0 0; min-height: 120px; background: #fff; border: solid #d2d2d2; border-width: 1px 1px 0 0; box-shadow: inset 0 2px #ececec, inset -2px -2px #e8e8e8; padding: 2px 2px 0 0; }
.tabs { display: flex; height: 57px; padding-left: 7px; align-items: flex-start; background: linear-gradient(#b0b0b0 0 3px, #f8f8f8 3px 8px, #a8a8a8 8px 10px, #d4d4d4 10px, #f4f4f4); border-bottom: 1px solid #b4b4b4; padding-top: 9px; }
.tab { height: 41px; padding: 0 15px 2px; font-size: 26px; line-height: 36px; border: 2px solid #b0b0b0; border-top-width: 1px; border-radius: 0 0 6px 6px; background: linear-gradient(#e9e9e9 50%, #dedede 50%); }
.tab-on { background: linear-gradient(#fff, #ececec); font-weight: 500; }
.status { display: flex; align-items: flex-start; justify-content: flex-end; height: 35px; padding: 3px 15px 0 0; border-top: 2px solid #fafafa; }
.s-ico { width: 32px; height: 32px; margin-right: 6px; margin-top: -2px; }
.s-text { width: 237px; padding-left: 16px; line-height: 22px; }
.led { width: 21px; height: 21px; border-radius: 50%; border: 2px solid #9a9a9a; margin-left: 9px; }
.led-green { background: radial-gradient(circle at 50% 25%, #a9d59b, #3f8f2f 60%, #1d6a10); }
.led-red { background: radial-gradient(circle at 50% 25%, #c98580, #7d1410 60%, #5a0503); }

.behind { display: flex; flex-direction: column; min-width: 0; overflow: hidden; background: linear-gradient(90deg, #c9c9c9, #e6e6e6); color: #111; font-size: 26px; white-space: nowrap; }
.behind p { line-height: 40px; }
.b-top { height: 52px; background: #2f70ae; }
.b-bar { height: 9px; background: #c4c4c4; border-bottom: 1px solid #999; }
.b-head { height: 154px; background: linear-gradient(#b9b9b9, #b9b9b9) no-repeat 0 122px / 100% 2px; }
.b-msg { background: linear-gradient(90deg, #b4b4b4, #cacaca); }
.b-msg1 { height: 290px; padding-top: 56px; }
.b-msg .dim { color: #6c6e72; font-size: 24px; line-height: 38px; }
.b-msg .first { padding-left: 5px; }
.b-msg .gap { margin-top: 22px; text-indent: -12px; }
.b-space { height: 182px; padding-top: 108px; color: #b4b4b4; font-size: 22px; }
.b-space span { display: inline-block; rotate: -14deg; text-indent: -4px; }
.b-chip { height: 74px; line-height: 74px; text-indent: -13px; background: linear-gradient(90deg, #b4b4b4, #c6c6c6); }
.b-time { height: 144px; padding: 52px 0 0 8px; font-size: 22px; color: #777; }
.b-msg2 { height: 229px; padding-top: 20px; overflow: hidden; }
.b-msg2 .link { color: #2f6fd0; text-indent: -7px; }
.b-check { height: 289px; padding-top: 26px; border-bottom: 2px solid #9a9a9a; }
.b-check svg { width: 32px; height: 26px; }
.b-rest { height: 183px; border-bottom: 2px solid #b4b4b4; }
.b-rest:last-child { height: 313px; }

.dock { grid-column: 1 / -1; display: grid; grid-template-columns: 998fr 344fr 1086fr; margin-top: -20px; height: 28px; overflow: hidden; }
.dock-navy { background: #332d57; }
.dock-side { background: #a29d9f; }
.dock-doc { background: #adadad; padding-left: 39px; font-size: 28px; font-weight: 700; line-height: 28px; color: #4c4c4c; }
.mark-box { position: absolute; left: 7px; top: 106px; width: 628px; height: 257px; border: 6px solid #ee4128; border-radius: 10px; z-index: 2; }
.watermark { position: absolute; right: 16px; bottom: 7px; z-index: 2; font: 19px/26px "Liberation Sans", sans-serif; color: #8f8f8f; text-shadow: 1px 1px 0 #fff; }
```
